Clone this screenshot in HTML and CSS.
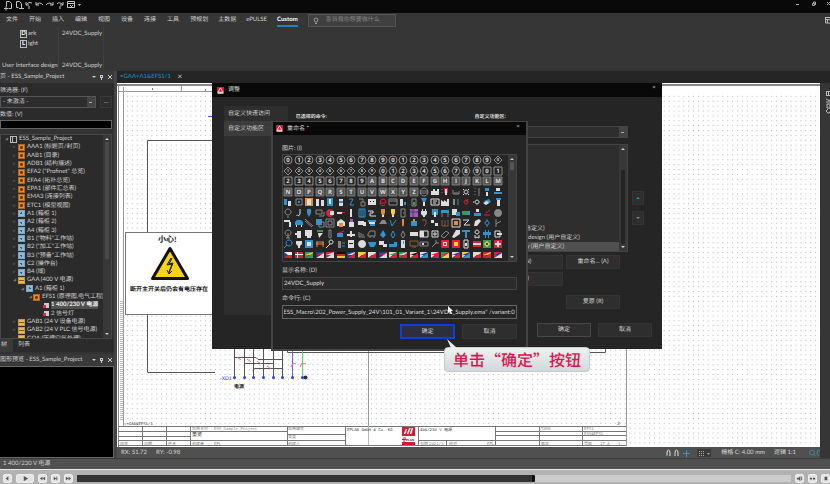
FILE: index.html
```html
<!DOCTYPE html>
<html lang="zh-CN">
<head>
<meta charset="utf-8">
<title>ESS_Sample_Project</title>
<link rel="stylesheet" href="styles.css">
</head>
<body>
<header class="titlebar">
  <svg class="quick" width="84" height="12" fill="none" stroke="#c4c4c4" stroke-width="1">
    <path d="M6.500 1.500h3l2 2v5h-3M6.500 1.500v5M4 8.500h4M6 6.500v4"/>
    <path d="M16.500 1.500h3l2 2v5M16.500 1.500v6h2M19 8.500h5"/>
    <path d="M26 2v3h3M26 5q3-4 6-2M29 6v3"/>
    <path d="M36 2v3h3M36 5q4-4 7 0"/>
    <path d="M53 2v3h-3M53 5q-4-4-7 0"/>
    <path d="M63 2v3h-3M63 5q-4-4-6-1M60 6v3"/>
    <path d="M67.500 1.500h7v6h-7zM67 3.500h8M70 5l3 3M73 5l-3 3"/>
    <path d="M78 4h3l-1.500 2z" fill="#c4c4c4" stroke="none"/>
  </svg>
  <svg class="window-buttons" width="36" height="12" fill="none" stroke="#aaa">
    <path d="M2 4.500h3M18.500 3.500h2v2h-2zM19.500 3v-1h2v3M33 2l3 3M36 2l-3 3"/>
  </svg>
</header>

<section class="ribbon">
  <nav class="tabs">
    <a href="#">文件</a><a href="#">开始</a><a href="#">插入</a><a href="#">编辑</a><a href="#">视图</a><a href="#">设备</a><a href="#">连接</a><a href="#">工具</a><a href="#">预规划</a><a href="#">主数据</a><a href="#">ePULSE</a><a href="#" class="active">Custom</a>
    <label class="tell"><svg width="8" height="8" fill="none" stroke="#999"><path d="M3 6q0-1-1-2a2 2 0 1 1 4 0q-1 1-1 2zM3 7.500h2"/></svg><input type="text" placeholder="告诉我你想要做什么" aria-label="搜索"></label>
    <svg class="ribbon-end" width="6" height="8" fill="none" stroke="#bbb"><path d="M1 1.500h6M1.500 1v6h5M1 3.500h6M3.500 3v4"/></svg>
  </nav>
  <div class="groups">
    <div class="group design">
      <div class="commands"><a href="#"><b>D</b>ark</a><a href="#"><b>L</b>ight</a></div>
      <span>User Interface design</span>
    </div>
    <div class="group supply"><a href="#">24VDC_Supply</a><span>24VDC_Supply</span></div>
  </div>
</section>

<main class="workspace">
  <aside class="sidebar">
    <div class="panel-head"><h2>页 - ESS_Sample_Project</h2><svg width="24" height="8" stroke="#ccc" fill="#ccc"><path d="M2 3h4l-2 2z" stroke="none"/><path d="M10.500 2v3M12.500 2v3M10 2.500h3M10 4.500h3M11.500 5v2M18 2l4 4M22 2l-4 4"/></svg></div>
    <div class="filters">
      <label for="filter">筛选器: (F)</label>
      <div class="filter-row"><select id="filter"><option>- 未激活 -</option></select><button type="button">...</button></div>
      <label for="value">数值: (V)</label>
      <input id="value" type="text">
    </div>
    <div class="tree-box">
      <ul class="tree">
        <li class="root"><i class="book"></i>ESS_Sample_Project</li>
        <li><i class="fn"></i>AAA1 (标题页/封页)</li>
        <li><i class="fn"></i>AAB1 (目录)</li>
        <li><i class="fn"></i>ADB1 (结构描述)</li>
        <li><i class="fn"></i>EFA2 ("Profinet" 总览)</li>
        <li><i class="fn"></i>EFA4 (拓扑总览)</li>
        <li><i class="fn"></i>EPA1 (部件汇总表)</li>
        <li><i class="fn"></i>EMA3 (连接列表)</li>
        <li><i class="fn"></i>ETC1 (模型视图)</li>
        <li><i class="loc"></i>A1 (箱柜 1)</li>
        <li><i class="loc"></i>A2 (箱柜 2)</li>
        <li><i class="loc"></i>A4 (箱柜 3)</li>
        <li><i class="loc"></i>B1 ("物料"工作站)</li>
        <li><i class="loc"></i>B2 ("加工"工作站)</li>
        <li><i class="loc"></i>B3 ("预备"工作站)</li>
        <li><i class="loc"></i>C2 (操作台)</li>
        <li><i class="loc"></i>B4 (域)</li>
        <li class="open"><i class="plant"></i>GAA (400 V 电源)</li>
        <li class="open level-2"><i class="loc"></i>A1 (箱柜 1)</li>
        <li class="open level-3"><i class="fn"></i>EFS1 (原理图,电气工程)</li>
        <li class="leaf level-4"><i class="page"></i><strong>1 400/230 V 电源</strong></li>
        <li class="leaf level-4"><i class="page"></i>2 信号灯</li>
        <li><i class="plant"></i>GAB1 (24 V 设备电源)</li>
        <li><i class="plant"></i>GAB2 (24 V PLC 信号电源)</li>
        <li><i class="plant"></i>GQA (压缩空气处理)</li>
      </ul>
      <div class="scroll tree-scroll"><i></i></div>
    </div>
    <div class="panel-tabs"><a href="#" class="on">树</a><a href="#">列表</a></div>
    <div class="panel-head second"><h2>图形预览 - ESS_Sample_Project</h2><svg width="24" height="8" stroke="#ccc" fill="#ccc"><path d="M2 3h4l-2 2z" stroke="none"/><path d="M10.500 2v3M12.500 2v3M10 2.500h3M10 4.500h3M11.500 5v2M18 2l4 4M22 2l-4 4"/></svg></div>
    <div class="preview"></div>
  </aside>

  <section class="editor">
    <div class="doc-tabs"><a href="#">=GAA+A1&amp;EFS1/1 <span>×</span></a></div>
    <div class="canvas">
      <svg class="sheet" width="100%" height="100%">
        <defs>
          <pattern id="dots" width="4.880" height="4.880" patternUnits="userSpaceOnUse" x="125" y="89"><rect x="2" y="2" width="1" height="1" fill="#b4b4ba"/></pattern>
        </defs>
        <g transform="translate(-117 -83)" fill="none" stroke="#555" stroke-width="1">
          <rect x="117" y="83" width="1200" height="900" fill="#fff" stroke="none"/>
          <rect x="125" y="93" width="1200" height="900" fill="url(#dots)" stroke="none"/>
          <path d="M117 84.500h1200M117 85.500h1200M118.500 85v362" stroke="#888"/>
          <path d="M119 91.500h508M123.500 87v339M181.500 86v6M626.500 348v98M368.500 348v97" stroke="#999"/>
          <path d="M152.500 88v2M205.500 89v2" stroke="#777"/>
          <path d="M121.500 301v120" stroke="#bbb" stroke-width="3" stroke-dasharray="1 1"/>
          <path d="M215 140.500h-67.500v232H215"/>
          <path d="M208 116.500h5" stroke="#55f"/>
          <rect x="125.500" y="232.500" width="100" height="82" fill="#fff" stroke="#777"/>
          <path d="M170 248.500L187.500 278.500H152.500z" fill="#f5d414" stroke="#111" stroke-width="3" stroke-linejoin="round"/>
          <path d="M171 258l-4 7 5-1-3 8M172 258l-3 6 4-1-4 10M167 270l2 4 3-3" stroke="#111"/>
          <g class="serif" fill="#111" stroke="none">
            <text x="158" y="242" font-size="8">小心!</text>
            <text x="130" y="291" font-size="6">断开主开关后仍会有电压存在</text>
          </g>
          <path d="M234.500 349v28M244.500 349v28M253.500 349v28M263.500 349v28M273.500 349v28M282.500 349v28M244 365.500q0-2 2-2h27M253 370.500q0-2 2-2h27M234 357.500h22l2 2h24M282.500 349v20M287.500 349v3.500H605.500v-5"/>
          <path d="M292.500 349v28" stroke="#66f"/>
          <path d="M302.500 349v28" stroke="#5d5"/>
          <path d="M257 361l4 3M267 366l4 3M237 357l4 3M247 359l4 3M291 367l2-4 3 1M300 367l2-4 4 1" stroke="#f66"/>
          <g fill="#33f" stroke="none"><circle cx="234.500" cy="377.500" r="1.500"/><circle cx="244.500" cy="377.500" r="1.500"/><circle cx="253.500" cy="377.500" r="1.500"/><circle cx="263.500" cy="377.500" r="1.500"/><circle cx="273.500" cy="377.500" r="1.500"/><circle cx="282.500" cy="377.500" r="1.500"/><circle cx="292.500" cy="377.500" r="1.500"/><circle cx="302.500" cy="377.500" r="1.500"/><circle cx="305.500" cy="377.500" r="2" fill="#333"/><text x="220" y="380" font-size="5">-XD1</text></g>
          <rect x="119" y="426" width="507" height="19" fill="#fff" stroke="none"/>
          <path d="M118 426.500h508M118 445.500h508M118 431.500h72M118 436.500h72M118 440.500h169M142.500 426v19M166.500 426v19M190.500 426v19M190 431.500h97M287.500 426v19M287 434.500h58M287 440.500h58M345.500 426v19M418.500 426v19M418 440.500h77M446.500 440v5M495.500 426v19M495 431.500h131M495 435.500h131M495 440.500h131M539.500 426v19M582.500 426v19" stroke="#777"/>
          <path d="M368.500 426v19" stroke="#bbb"/>
          <g class="mono" fill="#333" stroke="none" font-size="4">
            <text x="124" y="425">=+GAA&amp;EFS1/1</text><text x="617" y="425" font-size="5">2</text>
            <text x="192" y="430" fill="#888">项目名称</text><text x="214" y="430" fill="#888">ESS_Sample_Project</text>
            <text x="192" y="436" font-size="5">董览</text>
            <text x="120" y="445" fill="#777">改变</text><text x="144" y="445" fill="#777">日期</text><text x="168" y="445" fill="#777">姓名</text><text x="192" y="445" fill="#777">创建者</text><text x="214" y="445" fill="#777">EPL</text>
            <text x="288" y="430" fill="#777">项目编号</text><text x="288" y="438" fill="#777">类型</text><text x="288" y="445" fill="#777">创建人</text>
            <text x="347" y="431">EPLAN GmbH &amp; Co. KG</text>
            <text x="420" y="431">400/230 V 电源</text>
            <text x="420" y="445" fill="#777">日期</text><text x="429" y="445" fill="#777">2021/1</text><text x="449" y="445" fill="#777">校对</text><text x="487" y="445" fill="#777">EPL</text>
            <text x="541" y="430" fill="#777">TASK</text><text x="541" y="445" fill="#777">版本</text><text x="584" y="430" fill="#777">EFS1</text><text x="584" y="435" fill="#777">ESS&amp;EFS1</text><text x="584" y="445" fill="#777">页数</text><text x="600" y="445" fill="#777">17 A</text><text x="618" y="445" fill="#777">1</text>
          </g>
          <text class="serif" x="234" y="388" font-size="5" fill="#111" stroke="none">电源</text>
          <path d="M402 427h13v9h-13zM402 442h13v3h-13z" fill="#d81830" stroke="none"/>
          <path d="M404.500 434l2-5M407.500 434l2.500-6M410.500 434l2-6" stroke="#fff" stroke-width="1.500"/>
          <path d="M402 439.500h4M403 438h3M403 441h2" stroke="#d81830"/>
          <text class="logo-text" x="406" y="441" font-size="3" fill="#222" stroke="none">PLAN</text>
        </g>
      </svg>
    </div>
    <div class="coords">
      <span>RX: 51.72</span><span>RY: -0.98</span>
      <svg width="48" height="10" fill="none" stroke="#ddd"><path d="M3 8V5q0-3 1.500-3T6 5v3M11 8V5q0-3 1.500-3T14 5v3"/><path d="M2 7.500h2" stroke="#2a9bd8"/><path d="M22.500 2v7M19 5.500h7" stroke="#2a9bd8"/><path d="M33 1h14v8h-14z" fill="#3a3a3a" stroke="none"/><path d="M35 3.500h6M35 5.500h6M35 7.500h6" stroke="#aaa" stroke-dasharray="1 1"/><path d="M43 5h3l-1.500 2z" fill="#aaa" stroke="none"/></svg>
      <span>栅格 C: 4.00 mm</span><span>逻辑 1:1</span>
      <svg width="13" height="10" fill="none" stroke="#3e86aa"><circle cx="5" cy="4.500" r="2.500"/><path d="M6.500 6l2 2M13 2q-3 0-3 3 0 2 2 3"/></svg>
    </div>
  </section>
  <div class="rail"><svg width="10" height="40" fill="none" stroke="#bbb"><path d="M6 3.500h4M6.500 3v5M8.500 3v5M6 7.500h4M6 11l4 2M6 14h4M7 16h3v4h-3zM8 21l-2 2 2 2h2"/></svg></div>
</main>

<footer class="status">1 400/230 V 电源</footer>
<footer class="player">
  <button type="button" aria-label="后退"><svg viewBox="0 0 8 8"><path d="M5 1.500L2 4l3 2.500zM6 2v4"/></svg></button>
  <button type="button" class="play" aria-label="播放"><svg viewBox="0 0 8 8"><path d="M2 1l5 3-5 3z"/></svg></button>
  <button type="button" aria-label="上一个"><svg viewBox="0 0 8 8"><path d="M4 2L1 4l3 2zM7 2L4 4l3 2z"/></svg></button>
  <button type="button" aria-label="下一个"><svg viewBox="0 0 8 8"><path d="M2 2l3 2-3 2zM5 2h1v4h-1z"/></svg></button>
  <button type="button" aria-label="快进"><svg viewBox="0 0 8 8"><path d="M1 2l3 2-3 2zM4 2l3 2-3 2z"/></svg></button>
  <input type="range" min="0" max="100" value="64" aria-label="进度">
  <button type="button" aria-label="音量"><svg viewBox="0 0 8 8"><path d="M1 3h2l2-2v6L3 5H1zM6 2h1v4h-1z"/></svg></button>
  <button type="button" aria-label="字幕"><svg viewBox="0 0 8 8"><path d="M1 3h2.500v2H1zM4.500 3H7v2H4.500z"/></svg></button>
  <button type="button" aria-label="退出"><svg viewBox="0 0 8 8"><path d="M3 2h3v4h-3z"/></svg></button>
</footer>

<section class="dialog adjust" role="dialog" aria-label="调整">
  <header><svg class="brand" viewBox="0 0 8 8"><path d="M0 0h8v8H0z" fill="#e0122e"/><path d="M4 1l3 5H1zM1 7h6" fill="none" stroke="#fff"/></svg><h2>调整</h2><button type="button" class="close" aria-label="关闭">×</button></header>
  <div class="adjust-body">
    <nav class="side-nav"><a href="#">自定义快速访问</a><a href="#" class="on">自定义功能区</a></nav>
    <p class="col-a">已选择的命令:</p>
    <div class="col-b">
      <p>自定义功能区:</p>
      <select aria-label="自定义功能区"><option></option></select>
      <div class="command-list"><ul><li>Custom (用户自定义)</li><li>User Interface design (用户自定义)</li><li class="on">24VDC_Supply (用户自定义)</li></ul><div class="scroll list-scroll"><i></i></div></div>
      <div class="button-grid"><button type="button">新建... (N)</button><button type="button">重命名... (A)</button><button type="button">移除 (E)</button></div>
      <div class="button-grid restore"><button type="button">复原 (R)</button></div>
    </div>
    <div class="movers"><button type="button" class="up" aria-label="上移"></button><button type="button" class="down" aria-label="下移"></button></div>
  </div>
  <div class="actions"><button type="button" class="default">确定</button><button type="button">取消</button></div>
</section>

<section class="dialog rename" role="dialog" aria-label="重命名">
  <header><svg class="brand" viewBox="0 0 8 8"><path d="M0 0h8v8H0z" fill="#e0122e"/><path d="M4 1l3 5H1zM1 7h6" fill="none" stroke="#fff"/></svg><h2>重命名 *</h2><button type="button" class="close" aria-label="关闭">×</button></header>
  <form class="rename-body">
    <p>图片: (I)</p>
    <div class="icon-box"><div class="icons" id="icons"></div><div class="scroll icon-scroll"><i></i></div></div>
    <label for="name">显示名称: (D)</label>
    <input id="name" type="text" value="24VDC_Supply">
    <label for="command">命令行: (C)</label>
    <input id="command" class="focus" type="text" value='rname:"ESS_Macro\202_Power_Supply_24V\101_01_Variant_1\24VDC_Supply.ema" /variant:0'>
    <div class="rename-actions"><button type="button" class="confirm">确定</button><button type="button">取消</button></div>
  </form>
</section>
<svg class="pointer" width="6" height="9"><path d="M1 0v7l1.500-1.500L4 8l1-.5L4 5h2z" fill="#fff"/></svg>
<div class="callout">单击“确定”按钮</div>
<script src="icons.js"></script>
</body>
</html>
```
FILE: styles.css
```css
* { box-sizing: border-box; text-rendering: geometricPrecision; }
html, body { height: 100%; margin: 0; }
body {
  display: flex;
  flex-direction: column;
  position: relative;
  overflow: hidden;
  background: #2b2b2b;
  color: #d0d0d0;
  font: 6px/8px Lato, "Noto Sans CJK SC", sans-serif;
}
a { color: inherit; text-decoration: none; }
h2, p, ul { margin: 0; padding: 0; font: inherit; list-style: none; }
svg { display: block; flex: none; }
button, input, select { font: inherit; color: inherit; margin: 0; padding: 0; border: 1px solid #3a3a3a; border-radius: 0; background: #2e2e2e; min-width: 0; outline: 0; }
select { appearance: none; }

.titlebar { display: flex; justify-content: space-between; flex: none; height: 13px; background: #090909; }
.ribbon { flex: none; height: 58px; background: #363636; }
.tabs { display: flex; align-items: center; height: 14px; padding-left: 6px; gap: 11px; white-space: nowrap; }
.tabs a { height: 14px; line-height: 14px; }
.tabs a:nth-child(n+9) { margin-right: -1px; }
.tabs .active { color: #fff; font-weight: 700; border-bottom: 2px solid #1686bd; }
.tell { display: flex; align-items: center; gap: 6px; width: 88px; height: 13px; padding: 0 3px; background: #404040; border: 1px solid #555; }
.tell input { flex: 1; border: 0; background: none; }
.tell input::placeholder { color: #888; }
.ribbon-end { margin-left: auto; }
.groups { display: flex; height: 44px; }
.group { display: flex; flex-direction: column; justify-content: space-between; border-right: 1px solid #404040; padding: 3px 0 1px; white-space: nowrap; }
.design { width: 59px; padding-left: 2px; }
.supply { width: 45px; padding-left: 3px; }
.commands { display: flex; flex-direction: column; gap: 2px; padding-left: 18px; }
.commands a { display: flex; }
.commands b { width: 7px; height: 8px; margin-right: 1px; border: 1px solid #bbb; line-height: 6px; text-align: center; color: #fff; }

.workspace { flex: 1; display: flex; min-height: 0; }
.sidebar { flex: none; width: 117px; display: flex; flex-direction: column; background: #333; border-right: 3px solid #444; }
.panel-head { flex: none; display: flex; justify-content: space-between; align-items: center; height: 12px; white-space: nowrap; background: #393939; }
.filters { display: flex; flex-direction: column; padding: 2px 2px 0 0; background: #2b2b2b; }
.filters label { height: 11px; line-height: 11px; }
.filters input { height: 9px; background: #000; border-color: #666; }
.filter-row { display: flex; gap: 4px; height: 12px; margin-bottom: 1px; }
.filter-row select { flex: 1; padding-left: 2px; border-color: #555; background: linear-gradient(#aaa, #aaa) right 3px center / 3px 1px no-repeat, linear-gradient(#444, #444) right / 8px no-repeat #2e2e2e; }
.filter-row button { width: 12px; }
.tree-box { flex: 1; display: flex; min-height: 0; margin: 5px 2px 0 0; padding-left: 2px; border: 1px solid #484848; background: #2b2b2b; overflow: hidden; }
.tree { flex: 1; display: flex; flex-direction: column; overflow: hidden; white-space: nowrap; margin-bottom: -5px; }
.tree li { flex: 1; display: flex; align-items: center; gap: 2px; min-height: 0; padding-left: 10px; }
.tree li::before { content: "▹"; width: 4px; font-size: 5px; color: #777; margin-right: -1px; }
.tree li i { flex: none; width: 7px; height: 7px; border: 1px solid #b0681f; background: radial-gradient(#733300 1px, transparent 2px) #ee8726; }
.tree .root { padding-left: 2px; }
.tree .root i.book { border: 1px solid #bbb; background: linear-gradient(90deg, transparent 1px, #bbb 1px 2px, transparent 2px); }
.tree li i.loc { border-color: #7fa6c0; background: radial-gradient(#305c7a 1px, transparent 1px) #93bad4; }
.tree li i.plant { border-color: #c99c3b; background: linear-gradient(transparent 2px, #81591a 2px 3px, transparent 3px) #e4b957; }
.tree li i.page { border: 0; background: linear-gradient(#e7243f, #e7243f) 1px 3px / 3px 3px no-repeat, linear-gradient(#ccc, #ccc) 2px 1px / 5px 5px no-repeat; }
.tree .open::before, .tree .root::before { content: "◢"; font-size: 3px; }
.tree .leaf::before { content: ""; }
.tree .level-2 { padding-left: 18px; }
.tree .level-3 { padding-left: 26px; }
.tree .level-4 { padding-left: 34px; }
.tree strong { color: #eee; background: #505050; font-weight: 700; }
.scroll { flex: none; width: 8px; padding: 7px 2px; background: #383838; display: flex; justify-content: center; position: relative; }
.scroll i { width: 4px; background: #555; }
.scroll::before, .scroll::after { content: ""; position: absolute; left: 2px; border: 2px solid transparent; }
.scroll::before { top: 1px; border-bottom-color: #ccc; }
.scroll::after { bottom: 1px; border-top-color: #ccc; }
.tree-scroll i { height: 62%; background: #494949; }
.panel-tabs { flex: none; display: flex; height: 13px; margin-bottom: 2px; background: #2b2b2b; line-height: 12px; }
.panel-tabs a { padding: 0 6px 0 5px; }
.panel-tabs .on { padding-left: 1px; background: #3a3a3a; }
.preview { flex: none; height: 92px; background: #000; border: 1px solid #666; border-left: 0; }

.editor { flex: 1; min-width: 0; display: flex; flex-direction: column; }
.doc-tabs { flex: none; height: 12px; padding-left: 3px; line-height: 11px; background: #252525; color: #1592cf; }
.doc-tabs span { margin-left: 5px; color: #ccc; font-size: 8px; vertical-align: middle; }
.canvas { flex: 1; min-height: 0; overflow: hidden; background: #fff; }
.serif { font-family: "Liberation Serif", "Noto Sans CJK SC", serif; font-weight: 700; }
.mono { font-family: "Liberation Mono", "Noto Sans CJK SC", monospace; }
.logo-text { font-family: "Liberation Sans", sans-serif; font-weight: 700; }
.coords { flex: none; display: flex; align-items: center; gap: 9px; height: 11px; padding-left: 4px; background: #505050; color: #d5d5d5; white-space: nowrap; }
.coords svg:nth-of-type(1) { margin-left: auto; }
.coords svg:last-child { margin-left: 2px; }
.rail { flex: none; width: 10px; padding-top: 5px; background: #363636; border-top: 12px solid #252525; }
.status { flex: none; height: 11px; padding-left: 3px; line-height: 10px; background: #505050; border-top: 1px solid #3a3a3a; }
.player { flex: none; display: flex; align-items: center; gap: 4px; height: 15px; padding: 3px 0 1px 3px; background: #b2b2b2; border-top: 1px solid #e8e8e8; }
.player button { flex: none; width: 9px; height: 9px; background: #e4e4e4; border-color: #eee; border-radius: 2px; }
.player .play { width: 18px; }
.player svg { width: 7px; height: 7px; margin: auto; fill: #555; }
.player input { flex: 1; appearance: none; height: 7px; border: 0; background: linear-gradient(90deg, #333 64%, #ccc 64%); }
.player input::-webkit-slider-thumb { appearance: none; width: 3px; height: 7px; background: #111; border-radius: 1px; }

.dialog { position: absolute; display: flex; flex-direction: column; background: #252525; }
.dialog header { flex: none; display: flex; align-items: center; gap: 4px; height: 14px; padding: 0 5px; background: #090909; }
.dialog button { background: #2e2e2e; border-color: #343434; }
.dialog header .close { margin: 0 0 4px auto; width: 6px; background: none; border: 0; line-height: 6px; }
.brand { width: 7px; height: 7px; }
.adjust { left: 212px; top: 83px; width: 450px; height: 266px; }
.adjust-body { flex: 1; display: flex; padding: 9px 18px 0 12px; }
.side-nav { width: 64px; height: 209px; background: #2e2e2e; }
.side-nav a { display: block; height: 15px; line-height: 15px; padding-left: 4px; }
.side-nav .on { background: #3c3c3c; }
.col-a, .col-b p { font-size: 5px; line-height: 8px; padding-top: 7px; color: #ddd; font-weight: 700; }
.col-a { width: 187px; padding-left: 8px; }
.col-b { width: 154px; display: flex; flex-direction: column; }
.col-b select { flex: none; width: 100%; height: 12px; margin: 5px 0 6px; border-color: #444; background: linear-gradient(#aaa, #aaa) right 3px center / 3px 1px no-repeat, linear-gradient(#444, #444) right / 8px no-repeat #2e2e2e; }
.command-list { flex: none; display: flex; height: 108px; border: 1px solid #444; background: #2e2e2e; }
.command-list ul { flex: 1; display: flex; flex-direction: column; justify-content: flex-end; }
.command-list li { height: 9px; padding-left: 14px; line-height: 9px; white-space: nowrap; }
.command-list .on { background: #505050; }
.list-scroll i { height: 74px; margin-top: 18px; background: #252525; }
.button-grid { display: grid; grid-template-columns: 1fr 54px; gap: 3px; padding: 3px 8px 0 0; }
.button-grid button { height: 14px; }
.button-grid.restore { padding-top: 9px; }
.restore button { grid-column: 2; }
.movers { margin: 85px 0 0 4px; display: flex; flex-direction: column; gap: 6px; }
.movers button { width: 12px; height: 14px; display: grid; place-items: center; }
.movers button::after { content: ""; border: 2px solid transparent; }
.movers .up::after { border-bottom-color: #1592cf; border-top: 0; }
.movers .down::after { border-top-color: #888; border-bottom: 0; }
.actions { display: flex; justify-content: flex-end; gap: 7px; padding: 0 10px 12px 0; }
.actions button { width: 54px; height: 14px; }
.actions .default { border-color: #484848; }

.rename { left: 271px; top: 121px; width: 257px; height: 230px; border: 2px solid #444; border-top-width: 1px; }
.rename header { height: 13px; padding-left: 3px; }
.rename-body { display: flex; flex-direction: column; padding: 10px 9px 0; }
.rename-body p { height: 9px; line-height: 8px; }
.icon-box { display: flex; height: 108px; border: 1px solid #444; margin-bottom: 5px; }
.icons { flex: 1; display: grid; grid-template-columns: repeat(21, 1fr); grid-template-rows: repeat(10, 1fr); place-items: center; padding: 0 5px 1px 0; }
.icons svg { width: 8px; height: 8px; overflow: visible; }
.icons text { font: 700 6px "Open Sans", sans-serif; text-anchor: middle; fill: #ddd; }
.icon-scroll i { height: 8px; }
.rename-body label { height: 10px; line-height: 8px; }
.rename-body input { height: 13px; padding: 0 1px; margin-bottom: 5px; background: #2b2b2b; border-color: #444; color: #ddd; }
.rename-body input.focus { height: 14px; border-color: #666; background: #252525; }
.rename-actions { display: flex; justify-content: flex-end; gap: 7px; }
.rename-actions button { width: 55px; height: 15px; }
.rename-actions .confirm { border: 2px solid #0b3de0; background: #2c2f3c; }
.pointer { position: absolute; left: 447px; top: 306px; }
.callout { position: absolute; left: 444px; top: 347px; padding: 0 8px; border-radius: 4px; background: linear-gradient(#eef2ee, #d2d8dc); border: 1px solid #c4cccf; color: #e0134f; font: 500 16px/23px "Noto Sans CJK SC", sans-serif; white-space: nowrap; }
.callout::before { content: ""; position: absolute; left: 2px; top: -9px; width: 10px; height: 9px; background: #e8ecea; clip-path: polygon(0 0, 100% 100%, 40% 100%); }
```
FILE: icons.js
```js
const colours = { w: '#ddd', g: '#888', d: '#444', b: '#2f93cf', r: '#e0203a', o: '#e48a3c', y: '#f2d13c', p: '#a05ac8', n: '#3a9a50', k: '#181818', a: '#1d3f95', t: '#8a5a3a' };
const outlines = {
  circle: '<circle cx="4" cy="4" r="4"/>',
  diamond: '<path d="M4 0l4 4-4 4-4-4z"/>',
  hexagon: '<path d="M2 0h4l2 4-2 4H2L0 4z"/>',
  square: '<path d="M0 0h8v8H0z"/>'
};
const tile = (shape, char, filled) =>
  `<g fill="${filled ? '#555' : 'none'}" stroke="${filled ? '#888' : '#aaa'}" stroke-width=".8">${outlines[shape]}</g><text x="4" y="6.200"${shape === 'diamond' ? ' style="font-size:4px" dy="-.8"' : ''}>${char}</text>`;

const cells = [];
for (const c of '01234567890123456789') cells.push(tile('circle', c));
for (const c of '0123456789') cells.push(tile('diamond', c));
for (const c of '0123456789') cells.push(tile('hexagon', c));
for (const c of '0123456789') cells.push(tile('square', c));
for (const c of 'ABCDEFGHIJKLMNOPQRSTUVWXYZ') cells.push(tile('square', c, true));

// Each glyph is a list of "colour path" parts; an upper-case colour strokes the path.
const glyphs = [
  'G M4 0a4 4 0 1 0 .1 0M0 3h8M0 5h8', 'w M0 3h2V1h2v2h2V1h2v6H0z', 'r M3 0h4v5H3z|w M4 1h2v6H4z|B M1 1v1M1 4v1', 'G M1 2v4h6V3M3 6V4M5 6V4', 'W M4 2a2 2 0 1 0 .1 0M1 1l1 1M7 7l-1-1M7 1l-1 1M1 7l1-1', 'G M2 0v1M2 3v1M2 6v1M6 0v8', 'b M2 0h4v3H2z|w M3 4h2v4H3z', 'w M2 0h4v3H2z|b M0 4h8v2H0z',
  'b M0 1h3v6H0z|w M4 3h3v5H4z', 'G M1 1h6v6H1z|b M3 3h2v2H3z', 'o M0 0h8v8H0z|w M2 1h4v6H2z', 'w M0 1h3v7H0zM5 2h3v6H5z', 'b M1 0h6v8H1z|w M3 1h2v5H3z', 'w M2 1h4v7H2z|b M2 3h4v2H2z', 'B M2 1h4L3 7h4', 'G M1 1h4v3M3 4h4v4H3z', 'w M0 1h8v6H0z|k M2 3h1v1H2zM5 3h1v1H5z', 'R M1 5h6q0-4-3-4T1 5q1 4 5 2', 'G M0 1h8v6H0zM0 3h8', 'w M1 1h3v7H1z|b M5 4h2v3H5z', 'G M2 1h4v7H2z|n M3 4h2v3H3z', 'b M1 0h6L5 4H3z|w M3 4h2v4H3z', 'W M0 1h8v6H0zM2 3h4M2 5h3', 'w M0 2l3 2V2l3 2V1h2v7H0z', 'g M1 1h2v6H1z|B M5 2h2M5 4h2M5 6h2', 'R M4 2a2 2 0 1 0 .1 0M6 1l-2 3', 'W M4 2a2 2 0 1 0 .1 0|g M0 3h1v2H0z', 'b M1 3l5-2 2 3-5 3z|w M0 5l4-2 2 2-3 2z', 'w M3 1h3v7H3z|b M2 0h5v2H2z',
  'G M4 0a3 3 0 1 0 .1 0M3 8h2', 'W M5 0v5q-1 3-3 1|b M1 6h2v1H1z', 'b M2 0h4v4L4 8 2 4z', 'G M0 1h6v4H0zM3 7h5V3', 'r M4 0a4 4 0 1 0 .1 0|w M4 2h4v4H4z', 'w M0 3h5v2H0z|r M5 3h3v1H5z', 'w M3 0h2v8H3z', 'B M1 0h6v8H1zM3 0v8M5 0v8', 'W M0 2h5v2H2v3h6', 'o M2 0h4v4L5 6H3L2 4z|w M3 6h2v2H3z', 'y M2 0h4v4L5 6H3L2 4z|w M3 6h2v2H3z', 'G M2 0h4v8H2zM4 4h1', 'p M0 0h8v8H0z|D M0 3h8M3 0v8', 'w M1 2h6v3L5 7v1H3V7L1 5zM2 0h1v2H2zM5 0h1v2H5z', 'b M1 0h6v6H1z|w M3 3h2v5H3z', 'b M0 1h8v3H0z|G M1 4v4M7 4v4', 'w M0 0h5v6H0z|b M4 3h4v4H4z', 'n M0 2h5v4H0z|b M5 2h3v4H5z', 'w M3 0h3v3H3z|b M1 4h7v3H1z', 'R M1 6h6M3 4l4-3', 'g M4 0a4 4 0 1 0 .1 0',
  'w M0 1h6v2H0zM5 3h2v5H5z', 'b M0 3l2-2h4l2 2v3H0z|w M1 6h1v2H1zM6 6h1v2H6z', 'G M0 0l8 7M0 2l7 6', 'b M0 0h6v6H0z|G M3 3h5v5H3z', 'G M0 0h8v8H0zM2 2h4v4H2z', 'w M0 3l4-3 4 3v4H0z|o M2 4h4v4H2z', 'p M3 0h3v3H3z|w M2 3h5v5H2z', 'w M0 2h6v4H0zM5 3h3v4H5z', 'b M0 1h8v2H0zM2 5h5v2H2z|w M1 3h6v2H1z', 'g M3 1h3l2 4H0z', 'B M1 1l2 6L7 1', 'o M3 0h2v6L4 8 3 6z', 'b M1 2h6v5H1z|o M3 0h2v3H3z', 'T M2 1h4v4L4 7', 'w M0 1h3v3H0zM4 4h3v3H4z', 'T M1 1v6h6V1M4 1v6', 'W M0 0h8v8H0z|o M2 2h4v4H2z', 'W M1 1h6L2 6h6', 'w M1 7l1-5 4-2 2 2-4 5z', 'B M4 2a2 2 0 1 0 .1 0M4 0v2M4 6v2', 'G M2 0v8M2 5l5-3',
  'G M4 0a3 3 0 1 0 .1 0M4 3v5M2 8h4', 'w M2 1h4v7H2zM0 3h2v2H0z', 'w M0 0h7v6H0zM2 6h4v2H2z', 'n M1 0h6v2H1z|w M2 3h5L3 8z', 'G M3 0h2v5q1 3-1 3T3 5z', 'b M0 3h6v4H0z|R M2 3l5-2', 'w M0 4h8v2H0zM3 1h2v6H3z', 'G M1 2v5h6M3 3v3M5 4v2', 'G M2 1h5v5H0V4zM2 6v2M6 6v2', 'b M4 0l3 5-3 3-3-3z', 'B M4 1l2 4-2 3-2-3z', 'G M4 1l2 4-2 3-2-3z', 'w M0 2h8v4H0z', 'W M0 1h8v6H0z|w M0 1h4v6H0z', 'W M1 1h6v6H1zM3 3h2v2H3z', 'G M0 6l5-5 3 2-5 5z', 'w M4 0h4v4L2 8 0 7z', 'b M0 0h8v2H0zM3 2h2v6H3z', 'W M4 0a2 2 0 1 0 .1 0M2 5v3l2-1 2 1V5', 'b M0 2h8v3H0zM2 0h1v8H2zM5 0h1v8H5z', 'W M1 1h5v6H1z|w M3 3h5v2H3z',
  'B M5 0a3 3 0 1 0 .1 0M3 5L0 8', 'w M1 1h6v3L5 6v2H3V6L1 4z', 'b M0 0h8v8H0z|w M2 2h4v4H2z', 'O M0 2h8M1 2v5M7 2v5M0 4h8', 'W M5 0a2 2 0 1 0 .1 0M4 4L0 8', 'g M1 1h3v7H1z|B M5 3h3M5 6h3', 'w M1 0h6v8H1z|k M2 3h4v1H2z', 'w M4 0a4 4 0 1 0 .1 0', 'b M0 2h8v2L6 7H2z', 'w M0 1h5v4H0zM4 4h4v3H4z', 'b M0 4h8v3H0zM5 2h3v2H5z', 'w M2 0h4v8H2z|b M4 1h1v3H4z', 'T M0 1h8v5H0zM2 7h4', 'G M0 2h8v4H0z|w M2 3h2v2H2z', 'G M1 7l5-5M5 0v3h3', 'r M0 0h8v8H0z|w M2 2h4v4H2z|r M3 3h2v2H3z', 'r M0 0h8v8H0z|y M2 2h4v4H2z', 'W M2 0h4v8H2z|w M3 3h2v3H3z', 'r M0 1h8v6H0z|w M0 3h8v2H0z', 'n M0 0h8v8H0z|y M4 1l3 3-3 3-3-3z|a M3 3h2v2H3z', 'r M0 0h8v8H0z|w M3 1h2v6H3zM1 3h6v2H1z'
];
const flags = ['wra', 'wrr', 'nyn', 'arw', 'rww', 'kyr', 'awr', 'yyr', 'wwr', 'arw', 'wnr', 'nwr', 'wkr', 'wab', 'wrr', 'nry', 'war', 'yab', 'wwr', 'ryr', 'raw'];

for (const glyph of glyphs) {
  cells.push(glyph.split('|').map(part => {
    const key = part[0], path = part.slice(2), paint = colours[key.toLowerCase()];
    return key === key.toUpperCase() ? `<path d="${path}" fill="none" stroke="${paint}"/>` : `<path d="${path}" fill="${paint}"/>`;
  }).join(''));
}
flags.forEach((flag, index) => {
  const [top, middle, bottom] = [...flag].map(key => colours[key]);
  let art;
  if (index === 0) art = '<path d="M0 1h8v3H0z" fill="#eee"/><path d="M0 4h8v3H0z" fill="#d22"/><path d="M0 1l4 3-4 3z" fill="#1d3f95"/>';
  else if (index === 1) art = '<path d="M0 1h8v6H0z" fill="#d22040"/><path d="M2 1h1v6H2zM0 3h8v1H0z" fill="#eee"/>';
  else if (index === 5) art = '<path d="M0 1h8v2H0z" fill="#111"/><path d="M0 3h8v2H0z" fill="#d22"/><path d="M0 5h8v2H0z" fill="#f2c13c"/>';
  else art = `<path d="M0 1h8L0 7z" fill="${top}"/><path d="M8 1v3H0z" fill="${middle}"/><path d="M8 2v5H0z" fill="${bottom}"/>`;
  cells.push(art);
});
document.getElementById('icons').innerHTML = cells.map(art => `<svg viewBox="0 0 8 8">${art}</svg>`).join('');

const command = document.getElementById('command');
command.scrollLeft = command.scrollWidth;
```
